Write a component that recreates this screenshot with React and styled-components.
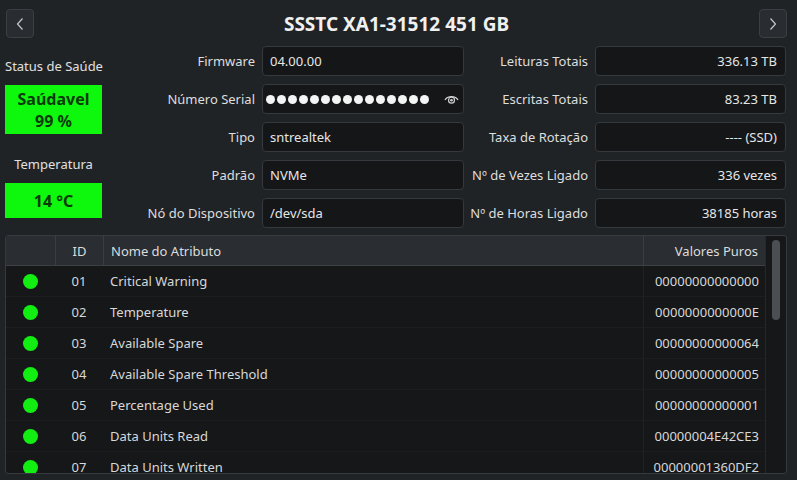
import React from 'react';
import styled, { createGlobalStyle } from 'styled-components';

const GlobalStyle = createGlobalStyle`
    html, body {
        margin: 0;
        padding: 0;
        background: #202326;
    }
    body {
        font-family: "Noto Sans", "Open Sans", sans-serif;
        color: #e3e3e3;
    }
`;

const Page = styled.div`
    width: 797px;
    height: 480px;
    overflow: hidden;
    display: flex;
    flex-direction: column;
    box-sizing: border-box;
    padding: 0 10px 0 5px;
`;

const TitleBar = styled.div`
    height: 46px;
    display: flex;
    align-items: center;
    justify-content: space-between;
    padding: 1px 0 0 1px;
    box-sizing: border-box;
`;

const Title = styled.h1`
    margin: 0;
    font-size: 19px;
    font-weight: 700;
    color: #f0f0f0;
`;

const NavButton = styled.button`
    width: 28px;
    height: 29px;
    padding: 0;
    display: flex;
    align-items: center;
    justify-content: center;
    background: #292c30;
    border: 1px solid #3b3e42;
    border-radius: 4px;
    color: #c8c8c8;
`;

const Top = styled.div`
    display: flex;
    gap: 7px;
`;

const HealthColumn = styled.div`
    width: 97px;
    display: flex;
    flex-direction: column;
    align-items: stretch;
`;

const HealthLabel = styled.div`
    font-size: 13px;
    text-align: center;
    white-space: nowrap;
    height: 20px;
    line-height: 20px;
    margin: ${(p) => p.$margin};
    color: #e0e0e0;
`;

const HealthBox = styled.div`
    height: ${(p) => p.$height}px;
    background: #0ef80e;
    color: #0b3a0b;
    font-weight: 700;
    font-size: 16px;
    line-height: 22px;
    display: flex;
    flex-direction: column;
    align-items: center;
    justify-content: center;
`;

const InfoGrid = styled.div`
    display: grid;
    grid-template-columns: 146px 202px 117px 191px;
    grid-auto-rows: 30px;
    column-gap: 7px;
    row-gap: 8px;
`;

const Label = styled.div`
    font-size: 13px;
    color: #dedede;
    display: flex;
    align-items: center;
    justify-content: flex-end;
    white-space: nowrap;
`;

const Field = styled.div`
    box-sizing: border-box;
    background: #141618;
    border: 1px solid #35383c;
    border-radius: 4px;
    font-size: 13px;
    color: #e6e6e6;
    display: flex;
    align-items: center;
    justify-content: ${(p) => (p.$right ? 'flex-end' : 'flex-start')};
    padding: 0 ${(p) => (p.$right ? '8px' : '7px')};
    overflow: hidden;
    white-space: nowrap;
`;

const SecretWrap = styled.div`
    flex: 1;
    min-width: 0;
    overflow: hidden;
    display: flex;
    justify-content: flex-end;
    gap: 2px;
    margin-left: -5px;
`;

const Dot = styled.span`
    flex-shrink: 0;
    width: 9px;
    height: 9px;
    border-radius: 50%;
    background: #f4f4f4;
`;

const EyeButton = styled.span`
    width: 30px;
    flex-shrink: 0;
    display: flex;
    justify-content: flex-end;
    margin-right: -3px;
    color: #cfcfcf;
`;

const TableFrame = styled.div`
    margin-top: 7px;
    height: 239px;
    box-sizing: border-box;
    border: 1px solid #36393d;
    border-radius: 3px;
    background: #151719;
    display: flex;
    overflow: hidden;
`;

const TableBody = styled.div`
    flex: 1;
    display: flex;
    flex-direction: column;
`;

const Columns = `
    display: grid;
    grid-template-columns: 49px 48px 1fr 122px;
`;

const HeaderRow = styled.div`
    ${Columns}
    height: 30px;
    background: #2a2d31;
    border-bottom: 1px solid #3d4044;
    box-sizing: border-box;
    flex-shrink: 0;
`;

const HeadCell = styled.div`
    font-size: 13px;
    color: #dcdcdc;
    display: flex;
    align-items: center;
    justify-content: ${(p) => p.$align || 'flex-start'};
    padding: ${(p) => p.$pad || '0'};
    border-left: ${(p) => (p.$first ? 'none' : '1px solid #3a3d41')};
`;

const Row = styled.div`
    ${Columns}
    height: 31px;
    flex-shrink: 0;
    border-bottom: 1px solid #1c1e21;
    box-sizing: border-box;
`;

const Cell = styled.div`
    font-size: 13px;
    color: #d8d8d8;
    display: flex;
    align-items: center;
    justify-content: ${(p) => p.$align || 'flex-start'};
    padding: ${(p) => p.$pad || '0'};
    border-left: ${(p) => (p.$line ? '1px solid #202225' : 'none')};
    white-space: nowrap;
`;

const StatusDot = styled.span`
    width: 15px;
    height: 15px;
    border-radius: 50%;
    background: #12ee12;
`;

const ScrollTrack = styled.div`
    width: 21px;
    border-left: 1px solid #26292c;
    display: flex;
    justify-content: center;
    padding-top: 4px;
    box-sizing: border-box;
`;

const ScrollThumb = styled.div`
    width: 8px;
    height: 80px;
    border-radius: 4px;
    background: #4b4e53;
`;

const Chevron = ({ left }) => (
    <svg width="10" height="14" viewBox="0 0 10 14" fill="none">
        <path
            d={left ? 'M7.5 1.5 L2.5 7 L7.5 12.5' : 'M2.5 1.5 L7.5 7 L2.5 12.5'}
            stroke="currentColor"
            strokeWidth="1.2"
        />
    </svg>
);

const Eye = () => (
    <svg width="15" height="11" viewBox="0 0 15 11" fill="none">
        <path d="M1 6 C3.5 1.5 11.5 1.5 14 6" stroke="currentColor" strokeWidth="1.3" />
        <circle cx="7.5" cy="6.2" r="3" stroke="currentColor" strokeWidth="1.2" />
        <circle cx="7.5" cy="6.2" r="1.3" fill="currentColor" />
    </svg>
);

const info = [
    ['Firmware', '04.00.00', 'Leituras Totais', '336.13 TB'],
    ['Número Serial', null, 'Escritas Totais', '83.23 TB'],
    ['Tipo', 'sntrealtek', 'Taxa de Rotação', '---- (SSD)'],
    ['Padrão', 'NVMe', 'Nº de Vezes Ligado', '336 vezes'],
    ['Nó do Dispositivo', '/dev/sda', 'Nº de Horas Ligado', '38185 horas'],
];

const attributes = [
    ['01', 'Critical Warning', '00000000000000'],
    ['02', 'Temperature', '0000000000000E'],
    ['03', 'Available Spare', '00000000000064'],
    ['04', 'Available Spare Threshold', '00000000000005'],
    ['05', 'Percentage Used', '00000000000001'],
    ['06', 'Data Units Read', '00000004E42CE3'],
    ['07', 'Data Units Written', '00000001360DF2'],
];

export default function App() {
    return (
        <>
            <GlobalStyle />
            <Page>
                <TitleBar>
                    <NavButton>
                        <Chevron left />
                    </NavButton>
                    <Title>SSSTC XA1-31512 451 GB</Title>
                    <NavButton>
                        <Chevron />
                    </NavButton>
                </TitleBar>
                <Top>
                    <HealthColumn>
                        <HealthLabel $margin="10px 0 9px">Status de Saúde</HealthLabel>
                        <HealthBox $height={49}>
                            <span>Saúdavel</span>
                            <span>99 %</span>
                        </HealthBox>
                        <HealthLabel $margin="20px 0 9px">Temperatura</HealthLabel>
                        <HealthBox $height={35}>14 °C</HealthBox>
                    </HealthColumn>
                    <InfoGrid>
                        {info.map(([l1, v1, l2, v2]) => (
                            <React.Fragment key={l1}>
                                <Label>{l1}</Label>
                                {v1 === null ? (
                                    <Field>
                                        <SecretWrap>
                                            {Array.from({ length: 18 }, (_, i) => (
                                                <Dot key={i} />
                                            ))}
                                        </SecretWrap>
                                        <EyeButton>
                                            <Eye />
                                        </EyeButton>
                                    </Field>
                                ) : (
                                    <Field>{v1}</Field>
                                )}
                                <Label>{l2}</Label>
                                <Field $right>{v2}</Field>
                            </React.Fragment>
                        ))}
                    </InfoGrid>
                </Top>
                <TableFrame>
                    <TableBody>
                        <HeaderRow>
                            <HeadCell $first />
                            <HeadCell $align="center">ID</HeadCell>
                            <HeadCell $pad="0 0 0 7px">Nome do Atributo</HeadCell>
                            <HeadCell $align="flex-end" $pad="0 7px 0 0">
                                Valores Puros
                            </HeadCell>
                        </HeaderRow>
                        {attributes.map(([id, name, raw]) => (
                            <Row key={id}>
                                <Cell $align="center">
                                    <StatusDot />
                                </Cell>
                                <Cell $align="center">{id}</Cell>
                                <Cell $pad="0 0 0 7px">{name}</Cell>
                                <Cell $align="flex-end" $pad="0 6px 0 0" $line>
                                    {raw}
                                </Cell>
                            </Row>
                        ))}
                    </TableBody>
                    <ScrollTrack>
                        <ScrollThumb />
                    </ScrollTrack>
                </TableFrame>
            </Page>
        </>
    );
}
